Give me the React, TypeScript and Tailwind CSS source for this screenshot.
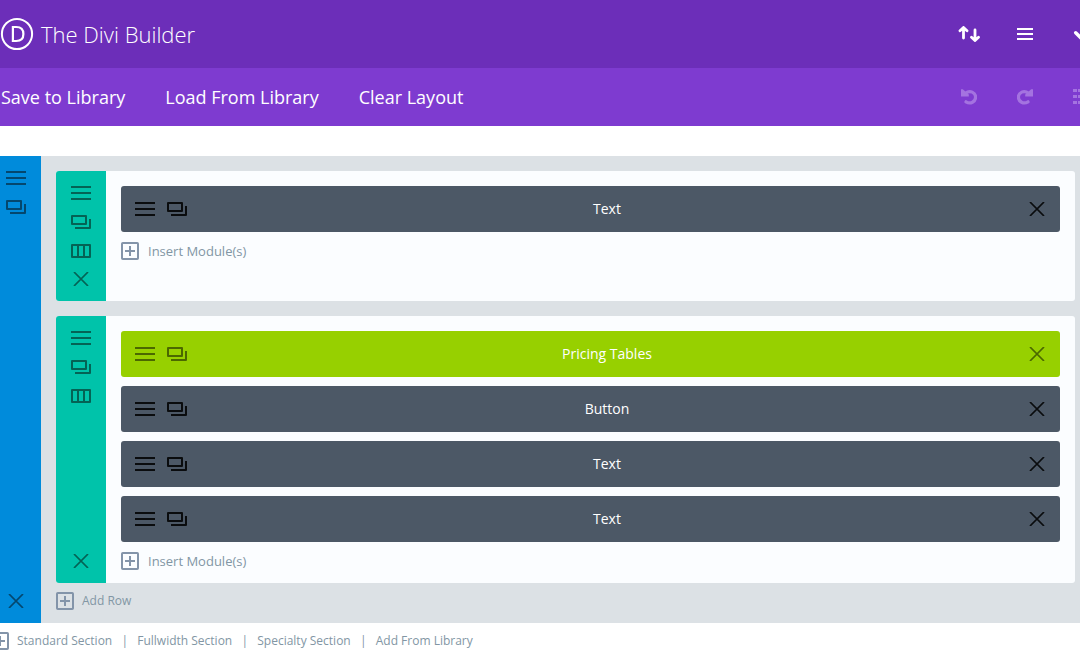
import { ReactNode } from "react";
import clsx from "clsx";

type Module = { name: string; global?: boolean };

const rows: { modules: Module[] }[] = [
  { modules: [{ name: "Text" }] },
  {
    modules: [
      { name: "Pricing Tables", global: true },
      { name: "Button" },
      { name: "Text" },
      { name: "Text" },
    ],
  },
];

const sectionLinks = ["Standard Section", "Fullwidth Section", "Specialty Section", "Add From Library"];

/* Icons */

function MenuIcon() {
  return (
    <svg width="20" height="14" viewBox="0 0 20 14" fill="currentColor">
      <path d="M0 0h20v2H0zM0 6h20v2H0zM0 12h20v2H0z" />
    </svg>
  );
}

function CloneIcon() {
  return (
    <svg width="20" height="14" viewBox="0 0 20 14" fill="none" stroke="currentColor" strokeWidth="2" strokeLinejoin="round">
      <path d="M1 1h14v8H1z" />
      <path d="M4 13h15V4" />
    </svg>
  );
}

function ColumnsIcon() {
  return (
    <svg width="20" height="14" viewBox="0 0 20 14" fill="none" stroke="currentColor" strokeWidth="2" strokeLinejoin="round">
      <path d="M1 1h18v12H1zM7 1v12M13 1v12" />
    </svg>
  );
}

function CloseIcon() {
  return (
    <svg width="20" height="14" viewBox="0 0 20 14" fill="none" stroke="currentColor" strokeWidth="1.7">
      <path d="M3 0l14 14M17 0L3 14" />
    </svg>
  );
}

function PlusIcon() {
  return (
    <svg className="shrink-0" width="18" height="18" viewBox="0 0 18 18" fill="none" stroke="#8394a9" strokeWidth="2">
      <rect x="1" y="1" width="16" height="16" rx="0.8" />
      <path d="M4 9h10M9 4v10" />
    </svg>
  );
}

function LogoIcon() {
  return (
    <svg width="34" height="34" viewBox="0 0 34 34" fill="none" stroke="#fff">
      <circle cx="17" cy="17" r="15.1" strokeWidth="2" />
      <path d="M12.9 10h3.3c4.6 0 7.2 2.7 7.2 7s-2.6 7-7.2 7h-3.3z" strokeWidth="2.2" />
    </svg>
  );
}

function PortabilityIcon() {
  return (
    <svg width="22" height="16" viewBox="0 0 22 16" fill="none" stroke="currentColor" strokeWidth="2.8" strokeLinecap="round" strokeLinejoin="round">
      <path d="M5.5 12V2M2 4.7l3.5-3.3L9 4.7" />
      <path d="M17 4v10M13.5 11.3l3.5 3.3 3.5-3.3" />
    </svg>
  );
}

function OptionsIcon() {
  return (
    <svg width="16" height="12" viewBox="0 0 16 12" fill="currentColor">
      <path d="M0 0h16v2H0zM0 5h16v2H0zM0 10h16v2H0z" />
    </svg>
  );
}

function CheckIcon() {
  return (
    <svg width="16" height="12" viewBox="0 0 16 12" fill="none" stroke="currentColor" strokeWidth="3.4" strokeLinecap="round">
      <path d="M2.7 4.7l4.3 4.3L14 2" />
    </svg>
  );
}

function UndoIcon({ flip = false }: { flip?: boolean }) {
  return (
    <svg className={clsx(flip && "-scale-x-100")} width="16" height="16" viewBox="0 0 16 16">
      <path d="M4.5 4.2C9 0.6 14.6 3.6 14.6 8c0 4.8-5.2 7.6-9.6 4.8" fill="none" stroke="currentColor" strokeWidth="3.2" strokeLinecap="round" />
      <path d="M0 .2V7.4h7.8V5.6L1.8 .2z" fill="currentColor" />
    </svg>
  );
}

function HistoryIcon() {
  return (
    <svg width="16" height="16" viewBox="0 0 16 16" fill="currentColor">
      <path d="M0 0h4v3H0zM5 0h11v3H5zM0 6h4v3H0zM5 6h11v3H5zM0 12h4v3H0zM5 12h11v3H5z" />
    </svg>
  );
}

function IconButton({ label, className, children }: { label: string; className?: string; children: ReactNode }) {
  return (
    <button type="button" aria-label={label} className={clsx("flex shrink-0 items-center justify-center", className)}>
      {children}
    </button>
  );
}

function AddButton({ children, className }: { children: ReactNode; className?: string }) {
  return (
    <button type="button" className={clsx("flex h-[18px] items-center leading-[18px] text-[#8296a4]", className)}>
      <PlusIcon />
      {children}
    </button>
  );
}

function ModuleBar({ name, global }: Module) {
  return (
    <div
      className={clsx(
        "flex h-[46px] items-center rounded-[3px] pr-[13px] pl-3.5",
        global ? "bg-[#97d000] text-[#4b6800]" : "bg-[#4c5866] text-[#0a0c0e]"
      )}
    >
      <div className="flex gap-3">
        <IconButton label="Module settings"><MenuIcon /></IconButton>
        <IconButton label="Clone module"><CloneIcon /></IconButton>
      </div>
      <span className="flex-1 text-center text-sm text-white">{name}</span>
      <IconButton label="Remove module"><CloseIcon /></IconButton>
    </div>
  );
}

function Row({ modules }: { modules: Module[] }) {
  return (
    <div className="flex min-h-[130px] overflow-hidden rounded-[3px] bg-[#fbfdff]">
      <div className="flex w-[50px] shrink-0 flex-col items-center justify-between gap-3.5 bg-[#00c3aa] py-[15px] text-[#046355]">
        <div className="flex flex-col gap-[15px]">
          <IconButton label="Row settings"><MenuIcon /></IconButton>
          <IconButton label="Clone row"><CloneIcon /></IconButton>
          <IconButton label="Change columns"><ColumnsIcon /></IconButton>
        </div>
        <IconButton label="Remove row"><CloseIcon /></IconButton>
      </div>
      <div className="min-w-0 flex-1 px-[15px] pt-[15px] pb-[13px]">
        <div className="flex flex-col gap-[9px]">
          {modules.map((m, i) => (
            <ModuleBar key={i} {...m} />
          ))}
        </div>
        <AddButton className="mt-2.5 gap-[9px] text-[13px]">Insert Module(s)</AddButton>
      </div>
    </div>
  );
}

export default function App() {
  return (
    <div className="overflow-hidden bg-white font-['Open_Sans','Noto_Sans',sans-serif]">
      {/* Title bar */}
      <header className="flex h-[68px] items-center bg-[#6c2eb9] text-white">
        <LogoIcon />
        <h1 className="ml-[7px] flex-1 text-[22px] font-light">The Divi Builder</h1>
        <div className="-mr-[29px] flex">
          <IconButton label="Portability" className="w-14"><PortabilityIcon /></IconButton>
          <IconButton label="Builder settings" className="w-14"><OptionsIcon /></IconButton>
          <IconButton label="Toggle builder" className="w-14"><CheckIcon /></IconButton>
        </div>
      </header>

      {/* Library actions */}
      <nav className="flex h-[58px] items-center bg-[#7e3bd0] pl-px text-white">
        <div className="flex flex-1 gap-10 text-lg">
          <button type="button">Save to Library</button>
          <button type="button">Load From Library</button>
          <button type="button">Clear Layout</button>
        </div>
        <div className="-mr-[29px] flex text-[#a473e0]">
          <IconButton label="Undo" className="w-14"><UndoIcon /></IconButton>
          <IconButton label="Redo" className="w-14"><UndoIcon flip /></IconButton>
          <IconButton label="History" className="w-14"><HistoryIcon /></IconButton>
        </div>
      </nav>

      {/* Section */}
      <section className="mt-[30px] flex bg-[#dce1e5]">
        <div className="flex w-[41px] shrink-0 flex-col justify-between bg-[#008bdb] py-[15px] pl-1.5 text-[#04476e]">
          <div className="flex flex-col items-start gap-[15px]">
            <IconButton label="Section settings"><MenuIcon /></IconButton>
            <IconButton label="Clone section"><CloneIcon /></IconButton>
          </div>
          <IconButton label="Remove section" className="self-start"><CloseIcon /></IconButton>
        </div>
        <div className="min-w-0 flex-1 pt-[15px] pr-[5px] pb-[13px] pl-[15px]">
          <div className="flex flex-col gap-[15px]">
            {rows.map((row, i) => (
              <Row key={i} modules={row.modules} />
            ))}
          </div>
          <AddButton className="mt-[9px] gap-2 text-xs">Add Row</AddButton>
        </div>
      </section>

      {/* Add section links */}
      <footer className="-ml-[9px] flex items-center gap-2 py-[9px] text-xs leading-[18px] text-[#8296a4]">
        <PlusIcon />
        <ul className="flex">
          {sectionLinks.map((link, i) => (
            <li key={link} className="flex">
              {i > 0 && <span className="w-[25px] text-center">|</span>}
              <a href="#">{link}</a>
            </li>
          ))}
        </ul>
      </footer>
    </div>
  );
}
